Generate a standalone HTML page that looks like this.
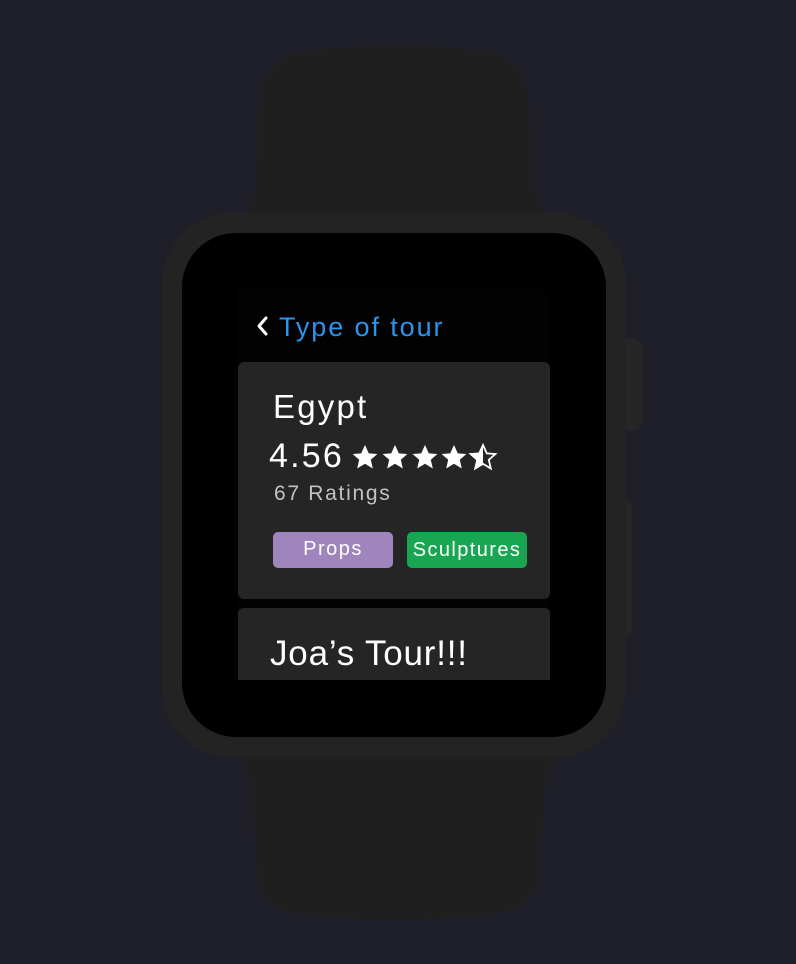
<!DOCTYPE html>
<html><head><style>
body{margin:0;width:796px;height:964px;background:#1e1f28;overflow:hidden;position:relative;font-family:"Liberation Sans","DejaVu Sans",sans-serif}
.abs{position:absolute}
</style></head><body>
<svg class="abs" style="left:0;top:0" width="796" height="964">
<defs><path id="st" d="M0 -13 L3.8 -4.6 L12.4 -4 L5.8 1.8 L7.8 10.5 L0 5.8 L-7.8 10.5 L-5.8 1.8 L-12.4 -4 L-3.8 -4.6 Z"/></defs>
<path d="M258 120 Q260 60 300 52 Q395 40 490 52 Q530 60 530 120 L535 190 Q540 215 565 230 L225 230 Q252 215 256 190 Z" fill="#1f1f1f"/>
<path d="M225 740 L565 740 Q548 760 545 790 L538 880 Q535 905 500 912 Q395 928 290 912 Q260 905 258 880 L252 790 Q248 760 225 740 Z" fill="#1f1f1f"/>
<rect x="613" y="338" width="30" height="93" rx="12" fill="#262626"/>
<rect x="620" y="502" width="12" height="132" rx="5" fill="#262626"/>
<rect x="162" y="213" width="464" height="544" rx="70" fill="#232323"/>
<rect x="182" y="233" width="424" height="504" rx="54" fill="#000"/>
<rect x="237" y="290" width="313" height="390" fill="#020202"/>
<path d="M266 318 L259 326 L266 334" stroke="#fff" stroke-width="3" fill="none" stroke-linecap="round" stroke-linejoin="round"/>
<rect x="238" y="362" width="312" height="237" rx="6" fill="#252525"/>
<path d="M238 680 L238 614 Q238 608 244 608 L544 608 Q550 608 550 614 L550 680 Z" fill="#252525"/>
<g fill="#fff">
<use href="#st" x="365" y="458"/><use href="#st" x="395" y="458"/><use href="#st" x="425" y="458"/><use href="#st" x="454" y="458"/>
</g>
<use href="#st" x="483" y="458" fill="none" stroke="#fff" stroke-width="1.8"/>
<path d="M483 445 L479.2 453.4 L470.6 454 L477.2 459.8 L475.2 468.5 L483 463.8 Z" fill="#fff"/>
</svg>
<div class="abs" style="left:279px;top:310px;color:#2c94ec;font-size:27px;line-height:34px;letter-spacing:1.9px">Type of tour</div>
<div class="abs" style="left:273px;top:387px;color:#fff;font-size:33px;line-height:40px;letter-spacing:2.2px">Egypt</div>
<div class="abs" style="left:269px;top:436px;color:#fff;font-size:34px;line-height:40px;letter-spacing:2.2px">4.56</div>
<div class="abs" style="left:274px;top:481px;color:#c2c2c2;font-size:21px;line-height:26px;letter-spacing:1.7px">67 Ratings</div>
<div class="abs" style="left:273px;top:532px;width:120px;height:36px;border-radius:5px;background:#a084bd;color:#fff;font-size:20px;line-height:34px;text-align:center;letter-spacing:1.5px">Props</div>
<div class="abs" style="left:407px;top:532px;width:120px;height:36px;border-radius:5px;background:#19a653;color:#fff;font-size:20px;line-height:36px;text-align:center;letter-spacing:1.4px">Sculptures</div>
<div class="abs" style="left:270px;top:632px;color:#fff;font-size:35px;line-height:44px;letter-spacing:0.8px">Joa’s Tour!!!</div>
</body></html>
